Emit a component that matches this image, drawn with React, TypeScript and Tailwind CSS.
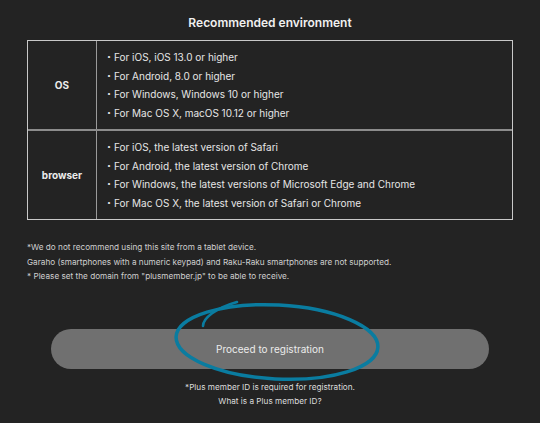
const osItems = [
  'For iOS, iOS 13.0 or higher',
  'For Android, 8.0 or higher',
  'For Windows, Windows 10 or higher',
  'For Mac OS X, macOS 10.12 or higher',
];

const browserItems = [
  'For iOS, the latest version of Safari',
  'For Android, the latest version of Chrome',
  'For Windows, the latest versions of Microsoft Edge and Chrome',
  'For Mac OS X, the latest version of Safari or Chrome',
];

function EnvRow({ label, items, last }: { label: string; items: string[]; last?: boolean }) {
  return (
    <div className={`grid grid-cols-[69px_1fr] ${last ? '' : 'border-b-2 border-[#8c8c8c]'}`}>
      <div className="flex items-center justify-center border-r border-[#9a9a9a] text-[10px] font-bold text-[#ececec]">
        {label}
      </div>
      <ul className="py-[7px] pl-[7px] text-[10px] leading-[18.5px] text-[#e6e6e6]">
        {items.map(t => (
          <li key={t} className="whitespace-nowrap">
            ・{t}
          </li>
        ))}
      </ul>
    </div>
  );
}

export default function App() {
  return (
    <div
      className="relative min-h-[423px] w-full bg-[#232323]"
      style={{ fontFamily: 'Inter, "Noto Sans CJK JP", sans-serif' }}
    >
      <h2 className="pt-[15px] text-center text-[12px] font-semibold leading-[16px] text-[#f0f0f0]">
        Recommended environment
      </h2>

      <div className="mx-[27px] mt-[9px] border border-[#c8c8c8]">
        <EnvRow label="OS" items={osItems} />
        <EnvRow label="browser" items={browserItems} last />
      </div>

      <div className="mx-[27px] mt-[20px] text-[8.2px] leading-[14.7px] text-[#cfcfcf]">
        <p>*We do not recommend using this site from a tablet device.</p>
        <p>Garaho (smartphones with a numeric keypad) and Raku-Raku smartphones are not supported.</p>
        <p>* Please set the domain from "plusmember.jp" to be able to receive.</p>
      </div>

      <button className="mx-[51px] mt-[45px] flex h-10 w-[438px] items-center justify-center rounded-full bg-[#707070] text-[10px] text-[#ececec]">
        Proceed to registration
      </button>

      <div className="mt-[11px] text-center text-[8.2px] leading-[14px] text-[#dcdcdc]">
        <p>*Plus member ID is required for registration.</p>
        <p>What is a Plus member ID?</p>
      </div>

      <svg
        className="pointer-events-none absolute inset-0"
        width="540"
        height="423"
        viewBox="0 0 540 423"
        fill="none"
      >
        <ellipse
          cx="277"
          cy="342"
          rx="101"
          ry="37"
          transform="rotate(3 277 342)"
          stroke="#0a7ca0"
          strokeWidth="3.5"
        />
        <path d="M203,326 C203,318 216,308 237,302" stroke="#0a7ca0" strokeWidth="2.6" strokeLinecap="round" />
      </svg>
    </div>
  );
}
